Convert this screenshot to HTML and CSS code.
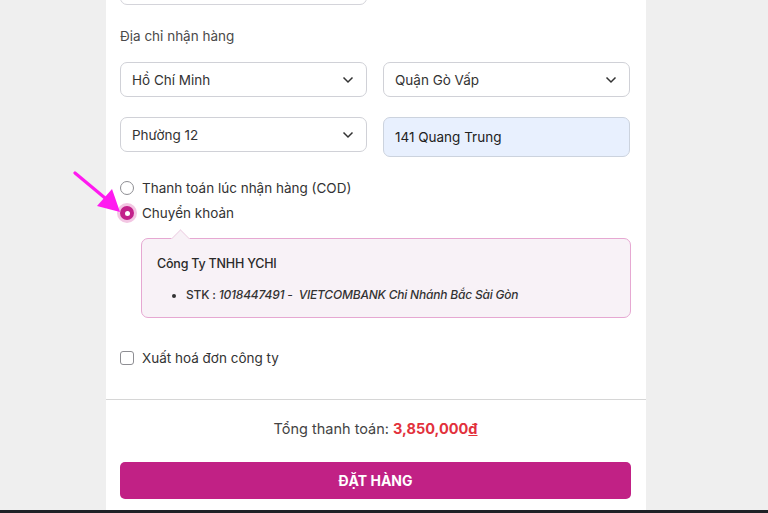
FILE: index.html
```html
<!DOCTYPE html>
<html lang="vi">
<head>
<meta charset="utf-8">
<link rel="stylesheet" href="styles.css">
</head>
<body>
<div class="page">
  <div class="panel">
    <div class="top-field"></div>
    <div class="label">Địa chỉ nhận hàng</div>
    <div class="grid">
      <div class="select"><span>Hồ Chí Minh</span><svg width="12" height="8" viewBox="0 0 12 8"><path d="M1.5 1.5 L6 6 L10.5 1.5" fill="none" stroke="#333" stroke-width="1.5"/></svg></div>
      <div class="select"><span>Quận Gò Vấp</span><svg width="12" height="8" viewBox="0 0 12 8"><path d="M1.5 1.5 L6 6 L10.5 1.5" fill="none" stroke="#333" stroke-width="1.5"/></svg></div>
      <div class="select"><span>Phường 12</span><svg width="12" height="8" viewBox="0 0 12 8"><path d="M1.5 1.5 L6 6 L10.5 1.5" fill="none" stroke="#333" stroke-width="1.5"/></svg></div>
      <div class="input">141 Quang Trung</div>
    </div>
    <div class="radios">
      <div class="radio-row"><span class="radio"></span><span>Thanh toán lúc nhận hàng (COD)</span></div>
      <div class="radio-row"><span class="radio checked"></span><span>Chuyển khoản</span></div>
    </div>
    <div class="bank">
      <div class="bank-name">Công Ty TNHH YCHI</div>
      <ul class="bank-list">
        <li><span class="stk">STK : </span><em>1018447491 -&nbsp; VIETCOMBANK Chi Nhánh Bắc Sài Gòn</em></li>
      </ul>
    </div>
    <div class="check-row"><span class="checkbox"></span><span>Xuất hoá đơn công ty</span></div>
    <div class="divider"></div>
    <div class="total">Tổng thanh toán: <b class="price">3,850,000<u>đ</u></b></div>
    <button class="order">ĐẶT HÀNG</button>
  </div>
  <svg class="arrow" width="60" height="50" viewBox="0 0 60 50">
    <line x1="2" y1="2" x2="38" y2="32" stroke="#ff1af0" stroke-width="3.2" stroke-linecap="round"/>
    <polygon points="47,41 24,35 39,18" fill="#ff1af0"/>
  </svg>
</div>
<div class="bottom-bar"></div>
</body>
</html>
```
FILE: styles.css
```css
* { box-sizing: border-box; }
html, body { margin: 0; padding: 0; }
body {
  background: #efefef;
  font-family: Inter, "Noto Sans", sans-serif;
  color: #333;
  width: 768px;
  height: 513px;
  overflow: hidden;
  position: relative;
}
.page {
  position: relative;
  height: 510px;
  display: flow-root;
}
.panel {
  position: relative;
  display: flow-root;
  margin-left: 106px;
  width: 540px;
  height: 510px;
  background: #fff;
  padding: 0 15px 0 14px;
}
.top-field {
  width: 247px;
  height: 20px;
  margin-top: -15px;
  border: 1px solid #d4d4da;
  border-radius: 7px;
}
.label {
  margin-top: 23px;
  font-size: 13.5px;
  color: #4a4a4a;
  line-height: 17px;
}
.grid {
  margin-top: 17px;
  display: grid;
  grid-template-columns: 247px 247px;
  column-gap: 16px;
  row-gap: 20px;
  align-items: start;
}
.select {
  height: 35px;
  border: 1px solid #d0d1d7;
  border-radius: 7px;
  display: flex;
  align-items: center;
  justify-content: space-between;
  padding: 0 12px 0 11px;
  font-size: 13.5px;
  color: #333;
}
.select svg { display: block; }
.input {
  height: 40px;
  border: 1px solid #ccd3de;
  border-radius: 7px;
  background: #e8f0fe;
  display: flex;
  align-items: center;
  padding: 0 11px;
  font-size: 13.5px;
  color: #222;
}
.radios {
  margin-top: 22px;
  display: flex;
  flex-direction: column;
  gap: 7px;
}
.radio-row {
  display: flex;
  align-items: center;
  gap: 8px;
  font-size: 13.5px;
  line-height: 18px;
  color: #333;
}
.radio {
  width: 14px;
  height: 14px;
  border-radius: 50%;
  border: 1px solid #8e8e93;
  background: #fff;
  flex: none;
}
.radio.checked {
  border: none;
  background: #c2208a;
  box-shadow: 0 0 0 3px #f3c6e3;
  position: relative;
}
.radio.checked::after {
  content: "";
  position: absolute;
  left: 4.5px;
  top: 4.5px;
  width: 5px;
  height: 5px;
  border-radius: 50%;
  background: #fff;
}
.bank {
  position: relative;
  margin-top: 16px;
  margin-left: 21px;
  border: 1px solid #e6a8d2;
  border-radius: 7px;
  background: #f8f2f7;
  padding: 16px 15px 16px 15px;
  height: 80px;
}
.bank::before {
  content: "";
  position: absolute;
  top: -7px;
  left: 32px;
  width: 12px;
  height: 12px;
  background: #f8f2f7;
  border-left: 1px solid #f0d8e8;
  border-top: 1px solid #f0d8e8;
  transform: rotate(45deg);
}
.bank-name {
  font-size: 12.5px;
  font-weight: 500;
  letter-spacing: -0.2px;
  color: #2a2a2a;
  line-height: 17px;
}
.bank-list {
  margin: 14px 0 0 0;
  padding-left: 29px;
  font-size: 12px;
  font-weight: 500;
  letter-spacing: -0.2px;
  color: #333;
  line-height: 17px;
}
.bank-list li::marker { font-size: 11px; }
.bank-list em { font-style: italic; font-weight: 500; }
.check-row {
  margin-top: 31px;
  display: flex;
  align-items: center;
  gap: 8px;
  font-size: 13.5px;
  line-height: 18px;
  color: #333;
}
.checkbox {
  width: 14px;
  height: 14px;
  border: 1px solid #8e8e93;
  border-radius: 3px;
  flex: none;
}
.divider {
  margin: 32px -15px 0 -14px;
  height: 1px;
  background: #d6d6d6;
}
.total {
  margin-top: 19px;
  text-align: center;
  font-size: 14.5px;
  color: #444;
  line-height: 20px;
}
.price { color: #e2313c; font-weight: 700; }
.order {
  display: block;
  margin-top: 23px;
  width: 511px;
  height: 37px;
  border: none;
  border-radius: 5px;
  background: #c12185;
  color: #fff;
  font-family: Inter, "Noto Sans", sans-serif;
  font-size: 14px;
  font-weight: 700;
}
.arrow {
  position: absolute;
  left: 73px;
  top: 171px;
}
.bottom-bar {
  height: 3px;
  background: #1e2126;
}
```
